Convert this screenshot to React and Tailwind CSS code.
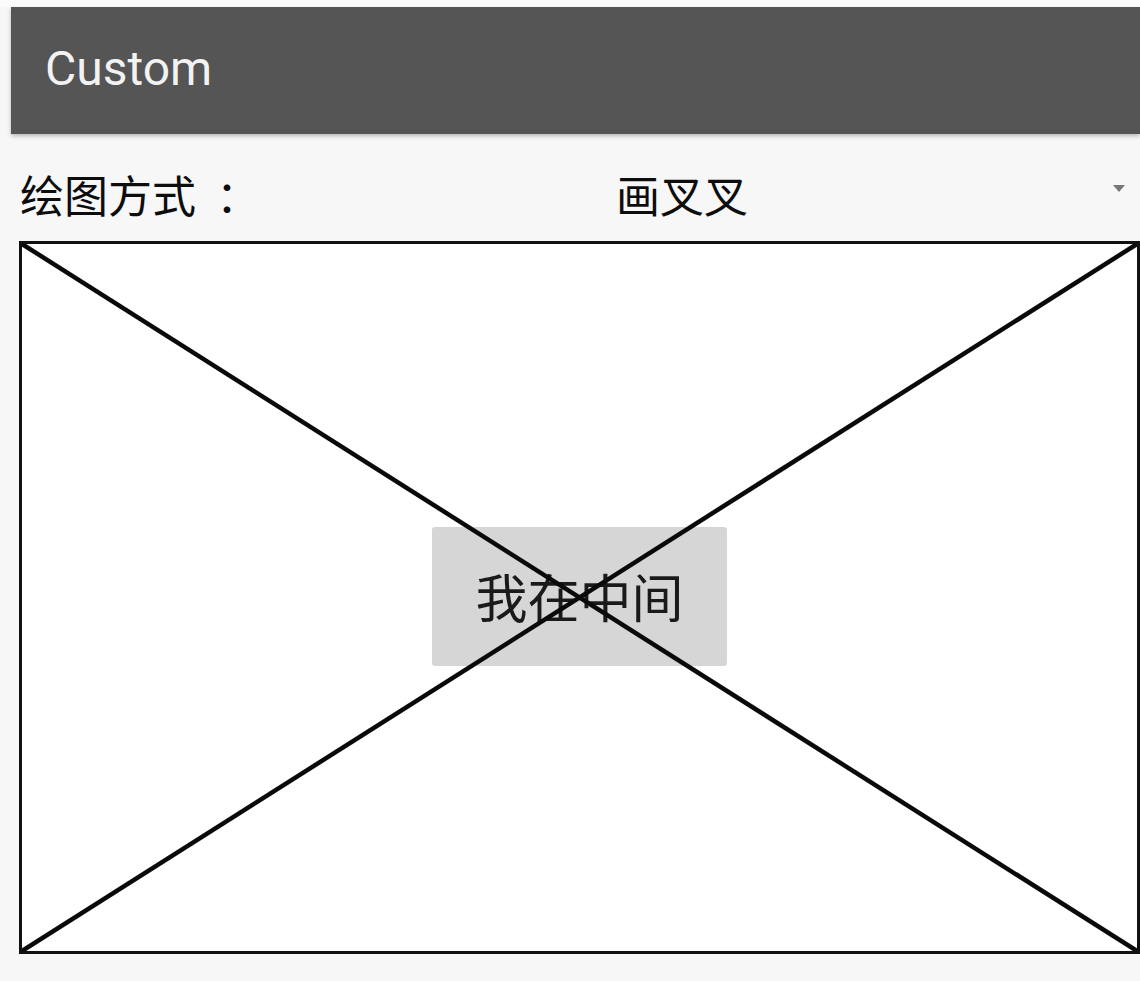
import React from "react";

export default function App() {
  const cjk = { fontFamily: '"Noto Sans CJK SC", "Noto Sans", sans-serif' };
  return (
    <div className="w-[1140px] h-[981px] bg-[#f7f7f7] flex flex-col overflow-hidden" style={cjk}>
      <div className="h-[7px] bg-[#fbfbfb]" />
      <div className="ml-[11px] h-[127px] bg-[#555555] flex items-center pl-[34px] shadow-[0_2px_4px_rgba(0,0,0,0.25)] relative z-10">
        <span className="text-[#f2f2f2] text-[48px] leading-none -mt-[4px]" style={{ fontFamily: 'Roboto, "Noto Sans", sans-serif' }}>
          Custom
        </span>
      </div>
      <div className="h-[107px] flex items-center pl-[20px] pr-[14px]">
        <span className="text-[#0d0d0d] text-[44px] leading-none mt-[12px]">
          绘图方式<span className="ml-[20px]">：</span>
        </span>
        <div className="flex-1 flex justify-center pr-[8px]">
          <span className="text-[#0d0d0d] text-[44px] leading-none mt-[12px]">画叉叉</span>
        </div>
        <svg width="14" height="8" viewBox="0 0 14 8" className="mt-[2px]">
          <polygon points="1,0 13,0 7,7" fill="#777" />
        </svg>
      </div>
      <div className="pl-[19px]">
        <div className="relative w-[1121px] h-[713px] bg-white border-[3px] border-[#111] flex items-center justify-center">
          <div className="w-[295px] h-[139px] bg-[#d6d6d6] rounded-[3px] flex items-center justify-center -mt-[3px]">
            <span className="text-[#1a1a1a] text-[52px] leading-none">我在中间</span>
          </div>
          <svg className="absolute inset-0 w-full h-full" viewBox="0 0 1115 707" preserveAspectRatio="none">
            <line x1="0" y1="0" x2="1115" y2="707" stroke="#0a0a0a" strokeWidth="4.5" />
            <line x1="1115" y1="0" x2="0" y2="707" stroke="#0a0a0a" strokeWidth="4.5" />
          </svg>
        </div>
      </div>
    </div>
  );
}
